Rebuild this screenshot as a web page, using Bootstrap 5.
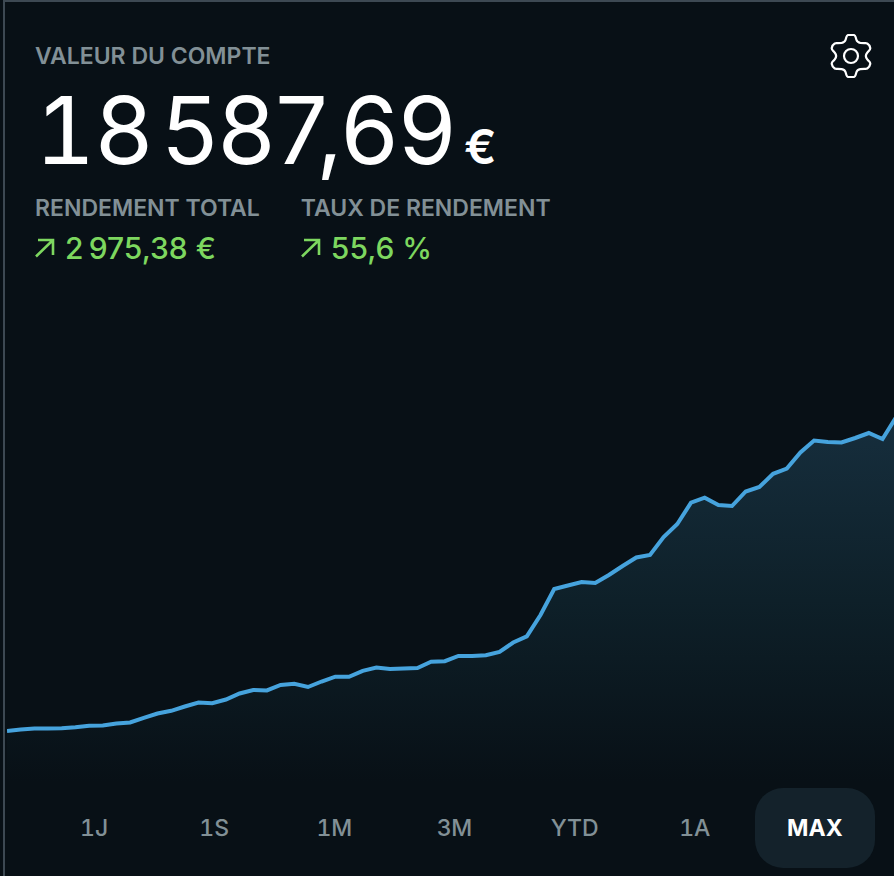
<!DOCTYPE html>
<html lang="fr">
<head>
<meta charset="utf-8">
<meta name="viewport" content="width=device-width, initial-scale=1">
<title>Valeur du compte</title>
<link href="https://cdn.jsdelivr.net/npm/bootstrap@5.3.0/dist/css/bootstrap.min.css" rel="stylesheet">
<style>
  body { background: #081016; color: #fff; font-family: Inter, "Liberation Sans", sans-serif; }
  .account-panel { margin-left: 3px; border-left: 2px solid #3d4953; border-top: 2px solid #3d4953; }
  .account-head { padding: 36px 22px 0 30px; }
  .caption { font-size: 23px; line-height: 36px; font-weight: 600; color: #829096; margin: 0; }
  .settings-btn { width: 42px; height: 44px; margin-top: -4px; }
  .settings-btn svg { width: 42px; height: 44px; }
  .amount { font-size: 93px; line-height: 104px; font-weight: 400; }
  .slab-one { font-variant-numeric: tabular-nums; }
  .currency { font-size: 48px; line-height: 1; font-weight: 600; }
  .metrics { column-gap: 41px; margin-top: 8px; }
  .metric-value { font-size: 30px; line-height: 44px; font-weight: 500; color: #7dd75f; gap: 10px; }
  .metric-value svg { width: 20px; height: 20px; }
  .chart { flex: 1 1 0; min-height: 200px; padding-left: 2px; }
  .ranges { padding: 0 19px 8px 29px; }
  .range-btn { height: 80px; border: 0; border-radius: 28px; font-size: 23px; font-weight: 500; color: #829096; padding: 0; }
  .range-btn:hover { color: #fff; }
  .range-btn.active { background: #14222b; color: #fff; font-weight: 700; }
</style>
<script src="https://cdn.jsdelivr.net/npm/bootstrap@5.3.0/dist/js/bootstrap.bundle.min.js"></script>
</head>
<body>
<main class="account-panel d-flex flex-column min-vh-100">
  <header class="account-head">
    <div class="d-flex justify-content-between align-items-start">
      <h1 class="caption">VALEUR DU COMPTE</h1>
      <button type="button" class="settings-btn btn p-0 border-0 d-flex" aria-label="Paramètres">
        <svg viewBox="0 0 42 44" fill="none" stroke="#fff" stroke-width="2.200" stroke-linejoin="round" aria-hidden="true">
          <path d="M18.5 1H23.5C24.7 1 25.2 1.7 25.6 3L26.4 5.8C27 7.8 28.4 8.6 30.3 8.9L34.2 9.2C35.5 9.2 36.5 9 37.3 9.5C38.5 10.2 40 12.400 40.300 14.200C40.400 15.300 39.700 16 38.700 17.100L37.200 18.800C35.700 20.600 35.700 23.400 37.200 25.200L38.700 26.900C39.700 28 40.400 28.700 40.300 29.800C40 31.600 38.500 33.800 37.300 34.500C36.500 35 35.500 34.800 34.200 34.800L30.300 35.100C28.400 35.400 27 36.200 26.400 38.200L25.600 41C25.200 42.300 24.700 43 23.500 43H18.500C17.300 43 16.800 42.300 16.400 41L15.600 38.200C15 36.200 13.600 35.400 11.700 35.100L7.800 34.800C6.500 34.800 5.500 35 4.700 34.500C3.500 33.800 2 31.600 1.700 29.800C1.600 28.700 2.300 28 3.300 26.900L4.800 25.200C6.300 23.400 6.300 20.600 4.800 18.800L3.300 17.100C2.300 16 1.600 15.300 1.700 14.200C2 12.400 3.500 10.200 4.700 9.500C5.500 9 6.500 9.200 7.800 9.200L11.700 8.900C13.600 8.600 15 7.800 15.600 5.800L16.400 3C16.800 1.700 17.300 1 18.500 1Z"/>
          <circle cx="21" cy="22" r="7"/>
        </svg>
      </button>
    </div>
    <div class="amount text-nowrap"><span class="slab-one">1</span>8&#8202;587,69<span class="currency">&#8201;€</span></div>
    <div class="metrics d-flex flex-wrap">
      <section>
        <h2 class="caption">RENDEMENT TOTAL</h2>
        <div class="metric-value d-flex align-items-center">
          <svg viewBox="0 0 20 20" fill="none" stroke="currentColor" stroke-width="2.600" aria-hidden="true"><path d="M1 18.500L18 2M3 2H18V17"/></svg>
          <span>2&#8201;975,38 €</span>
        </div>
      </section>
      <section>
        <h2 class="caption">TAUX DE RENDEMENT</h2>
        <div class="metric-value d-flex align-items-center">
          <svg viewBox="0 0 20 20" fill="none" stroke="currentColor" stroke-width="2.600" aria-hidden="true"><path d="M1 18.500L18 2M3 2H18V17"/></svg>
          <span>55,6 %</span>
        </div>
      </section>
    </div>
  </header>
  <svg class="chart w-100" viewBox="7 270 887 518" preserveAspectRatio="none" role="img" aria-label="Évolution de la valeur du compte">
    <defs>
      <linearGradient id="area-fill" gradientUnits="userSpaceOnUse" x1="0" y1="419" x2="0" y2="782">
        <stop offset="0" stop-color="#162e3d"/>
        <stop offset="0.500" stop-color="#0e2029"/>
        <stop offset="1" stop-color="#081016"/>
      </linearGradient>
    </defs>
    <path id="area" fill="url(#area-fill)"/>
    <path id="line" fill="none" stroke="#46a3dd" stroke-width="4" vector-effect="non-scaling-stroke"/>
  </svg>
  <nav class="ranges d-flex" aria-label="Période">
    <button type="button" class="range-btn btn flex-fill w-100"><span class="slab-one">1</span>J</button>
    <button type="button" class="range-btn btn flex-fill w-100"><span class="slab-one">1</span>S</button>
    <button type="button" class="range-btn btn flex-fill w-100"><span class="slab-one">1</span>M</button>
    <button type="button" class="range-btn btn flex-fill w-100">3M</button>
    <button type="button" class="range-btn btn flex-fill w-100">YTD</button>
    <button type="button" class="range-btn btn flex-fill w-100"><span class="slab-one">1</span>A</button>
    <button type="button" class="range-btn btn flex-fill w-100 active" aria-pressed="true">MAX</button>
  </nav>
</main>
<script>
  const levels = [731,729.5,728.5,728.5,728.2,727.3,725.7,725.5,723.5,722.5,717.8,713.5,710.8,706.5,702.6,703.2,699.5,693.5,690,690.4,685,683.7,687,681.5,676.7,676.8,670.8,667.5,669,668.5,668,661.8,661.2,656,656,655.3,652,642.5,636.3,615,589,585.5,582,583,575,566,557.5,555,537,524,502.7,497.7,505,506,491.5,487,473.8,468.5,452.5,440.5,442,442.5,438,433,439,417];
  const line = 'M' + levels.map((y, i) => (7 + i * 13.68).toFixed(1) + ' ' + y).join('L');
  document.getElementById('line').setAttribute('d', line);
  document.getElementById('area').setAttribute('d', line + 'V788H7Z');
</script>
</body>
</html>
